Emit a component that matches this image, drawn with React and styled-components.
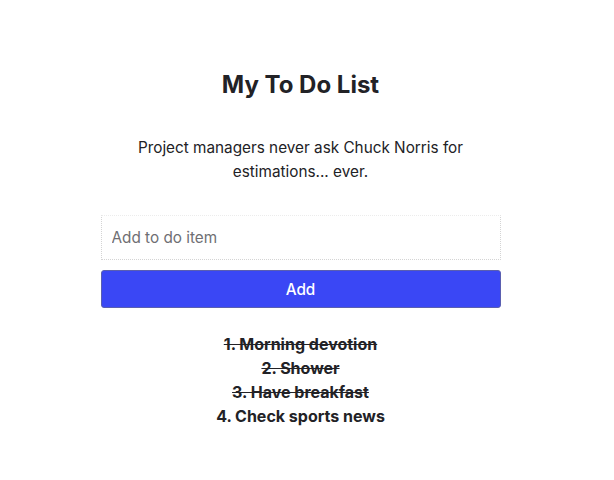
import React, { useState } from 'react';
import styled, { createGlobalStyle } from 'styled-components';

const GlobalStyle = createGlobalStyle`
  body {
    margin: 0;
    background: #fff;
    font-family: Inter, "Helvetica Neue", Arial, sans-serif;
    color: #222226;
  }
`;

const Page = styled.div`
  display: flex;
  flex-direction: column;
  align-items: center;
  padding: 71px 13px 0 0;
`;

const Title = styled.h1`
  margin: 0;
  font-size: 24px;
  font-weight: 700;
  line-height: 28px;
  color: #222226;
`;

const Quote = styled.p`
  width: 400px;
  margin: 37px 0 0;
  font-size: 15.3px;
  line-height: 24px;
  text-align: center;
  color: #222226;
`;

const Form = styled.form`
  width: 400px;
  display: flex;
  flex-direction: column;
  gap: 10px;
  margin-top: 31px;
`;

const Input = styled.input`
  box-sizing: border-box;
  width: 100%;
  height: 45px;
  padding: 0 10px;
  border: 1px dotted #d4d4d4;
  border-top-color: #ececec;
  outline: none;
  font-family: inherit;
  font-size: 15.3px;
  color: #222226;

  &::placeholder {
    color: #6f6f73;
  }
`;

const Button = styled.button`
  box-sizing: border-box;
  width: 100%;
  height: 38px;
  border: 1px solid #5a5fb0;
  border-radius: 3px;
  background: #3a47f5;
  color: #fff;
  font-family: inherit;
  font-size: 15.3px;
  font-weight: 500;
  cursor: pointer;
`;

const List = styled.ol`
  list-style: none;
  margin: 24px 0 0;
  padding: 0;
  text-align: center;
`;

const Item = styled.li`
  font-size: 16px;
  font-weight: 700;
  line-height: 24px;
  color: #222226;
  text-decoration: ${(props) => (props.done ? 'line-through' : 'none')};
`;

const initialItems = [
  { text: 'Morning devotion', done: true },
  { text: 'Shower', done: true },
  { text: 'Have breakfast', done: true },
  { text: 'Check sports news', done: false },
];

export default function App() {
  const [items, setItems] = useState(initialItems);
  const [value, setValue] = useState('');

  const handleSubmit = (e) => {
    e.preventDefault();
    if (!value.trim()) return;
    setItems([...items, { text: value.trim(), done: false }]);
    setValue('');
  };

  const toggle = (i) => {
    setItems(items.map((item, j) => (j === i ? { ...item, done: !item.done } : item)));
  };

  return (
    <Page>
      <GlobalStyle />
      <Title>My To Do List</Title>
      <Quote>Project managers never ask Chuck Norris for estimations... ever.</Quote>
      <Form onSubmit={handleSubmit}>
        <Input
          placeholder="Add to do item"
          value={value}
          onChange={(e) => setValue(e.target.value)}
        />
        <Button type="submit">Add</Button>
      </Form>
      <List>
        {items.map((item, i) => (
          <Item key={item.text} done={item.done} onClick={() => toggle(i)}>
            {`${i + 1}. ${item.text}`}
          </Item>
        ))}
      </List>
    </Page>
  );
}
